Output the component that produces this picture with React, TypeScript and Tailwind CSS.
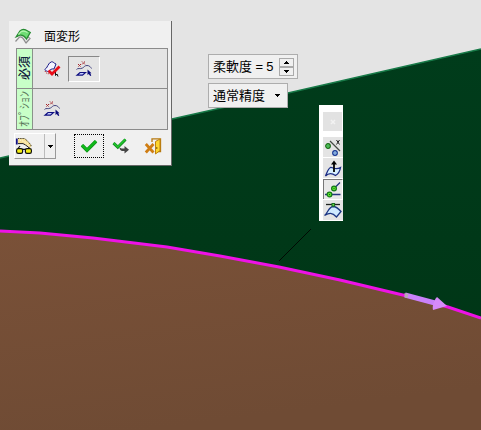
import React, { useState } from "react";

const fontStack = "font-['Liberation_Sans','Noto_Sans_CJK_JP',sans-serif]";

type IconProps = { children: React.ReactNode; className?: string };

function Icon({ children, className = "size-4" }: IconProps) {
  return (
    <svg viewBox="0 0 16 16" fill="none" aria-hidden="true" className={`${className} shrink-0 overflow-visible`}>
      {children}
    </svg>
  );
}

function SurfaceIcon() {
  return (
    <Icon>
      <path d="M0.5 12.5 L4.5 8 C8 7 9 11.5 11 14 L15 9.5 C13 8 11.5 6 9 5" fill="#e8e8e8" stroke="#8d8d8d" strokeWidth="1.2" />
      <path d="M1 8 L5 2 C6.5 0.5 8.500 0 10.5 0.8 L15.3 3.4 L11.5 10 C9.5 7 7.5 5.6 5 6.2 C3.500 6.6 2.2 7.6 1 8 Z" fill="#6fdc74" stroke="#278a32" strokeWidth="1.2" />
      <path d="M3.5 5.5 L6 2.7 C8 1.500 10 2 12.500 3.5" stroke="#b5f5b0" strokeWidth="1.2" />
    </Icon>
  );
}

function FacePickIcon() {
  return (
    <Icon>
      <path d="M0.8 8.5 C3.5 7.5 4 1.5 7.500 0.8 C9.500 0.5 10 2.500 12 3 L10 8 C7.500 7.500 6 8.500 4.500 11 C3.5 10 2 10.500 0.800 8.5 Z" fill="#f4f4ff" stroke="#1a1a86" />
      <path d="M1 10 C2.5 13 4 13 6 12.500" stroke="#b02020" strokeDasharray="1 1" />
      <path d="M11.5 9 V14.500 L13 13 L14 15.5" stroke="#111" />
      <path d="M4.5 9.500 L8 13 L15.500 5.5" stroke="#e80c18" strokeWidth="2.8" />
    </Icon>
  );
}

function CurvePickIcon() {
  return (
    <Icon>
      <path d="M2 3 L5 6 M5 3 L2 6 M6 0.5 L9 3.5 M9 0.5 L6 3.5" stroke="#a32026" strokeDasharray="1.4 0.5" />
      <path d="M0.5 8.5 C2 6.500 4 8.500 6.500 7 C8.500 6 8.500 4.500 11 4.500 C13.500 4.500 14.500 6 15.5 7.5" stroke="#43437f" />
      <path d="M1 14.2 L4 11.5 H9.5 L6.5 14.2 Z" fill="#c5cdff" stroke="#101080" strokeWidth="1.2" />
      <path d="M11.5 8.500 V14 L12.800 13 L14.2 15 L15.3 14.4 L14.2 12.2 H15.500 Z" fill="#0a0a7a" />
    </Icon>
  );
}

function PreviewIcon() {
  return (
    <Icon>
      <path d="M0.8 0.5 V6.5" stroke="#101080" strokeWidth="1.8" />
      <path d="M2 0.8 H8.5 L11 2.500 L15 7 V9.500 L12.500 9 L9.500 6.500 L7 5.500 H2 Z" fill="#f7df92" />
      <path d="M2 0.500 H8.5 L11 2.500 L15 7 V9" stroke="#4a4020" strokeDasharray="1.4 0.8" />
      <path d="M2 5.600 H7 L9.500 7 L12.500 9.2" stroke="#222" />
      <path d="M4 2 L8 4 L13 8 M6 1.800 L12 5.500" stroke="#fff9d8" strokeDasharray="1 1" />
      <rect x="0.6" y="10.600" width="6" height="4.800" rx="1.600" fill="#f5ef16" stroke="#111" strokeWidth="1.2" />
      <rect x="9.4" y="10.600" width="6" height="4.800" rx="1.600" fill="#f5ef16" stroke="#111" strokeWidth="1.2" />
      <path d="M6 11.3 H10 M2 10.500 L4 8 M13.500 10.500 L12.500 9" stroke="#111" strokeWidth="1.2" />
    </Icon>
  );
}

function CheckIcon() {
  return (
    <Icon>
      <path d="M1 7.2 L6 12.2 L15 3.2" stroke="#12911b" strokeWidth="3.6" />
      <path d="M1 7 L6 12 L15 3" stroke="#10b91a" strokeWidth="2.4" />
    </Icon>
  );
}

function ApplyIcon() {
  return (
    <Icon>
      <path d="M0.500 5.2 L4.800 9.2 L12.5 1.5" stroke="#128a20" strokeWidth="3" />
      <path d="M0.500 5 L4.800 8.900 L12.5 1.2" stroke="#20c52b" strokeWidth="1.6" />
      <path d="M6.500 9.5 L8.500 10.500 H11.500 V8 L16 11.8 L11.5 15.5 V13 H9 C7.500 12.500 6.500 11 6.500 9.500 Z" fill="#454545" />
    </Icon>
  );
}

function ExitIcon() {
  return (
    <Icon>
      <path d="M7 4 V0.8 H15.5 V13.5 H11" stroke="#b77910" strokeWidth="1.3" />
      <path d="M10.5 3.5 L15 1 V12.5 L10.5 16 Z" fill="#ffd52b" stroke="#bd8110" />
      <path d="M11.8 9 V11" stroke="#7a5008" />
      <path d="M0.8 6 L8.5 14.5 M8.5 6 L0.8 14.5" stroke="#cf7d13" strokeWidth="2.8" />
    </Icon>
  );
}

function PointLineIcon() {
  return (
    <Icon>
      <path d="M5 1 L15 11" stroke="#454b45" strokeWidth="1.3" />
      <path d="M11.500 0 L14.500 4.500 M14.500 0 L11.500 4.500" stroke="#222" />
      <circle cx="3" cy="6" r="2.3" fill="#5fe35f" stroke="#176817" strokeWidth="1.2" />
      <circle cx="10" cy="13" r="2.3" fill="#a8d3ff" stroke="#163590" strokeWidth="1.2" />
      <path d="M2.5 6 H3.5 M9.5 13 H10.5" stroke="#173060" />
    </Icon>
  );
}

function NormalIcon() {
  return (
    <Icon>
      <path d="M0.500 15 C2 12 3 7.500 5.500 6.5 C8 6 10 9.500 15.5 6.5 C15 10 13 13 10.500 14.5 C7 12 3.500 12 0.500 15 Z" fill="#d8f0ff" stroke="#1b2c84" strokeWidth="1.3" />
      <path d="M9 11 V2" stroke="#000" strokeWidth="1.8" />
      <path d="M9 -0.5 L12 3.500 H6 Z" fill="#000" />
    </Icon>
  );
}

function TangentIcon() {
  return (
    <Icon>
      <path d="M0 12.5 H15.5 M9 6.5 L15 0.5" stroke="#24347d" strokeWidth="1.3" />
      <circle cx="9" cy="6.5" r="2.4" fill="#57e52e" stroke="#167819" strokeWidth="1.2" />
      <circle cx="4.5" cy="12.5" r="2.4" fill="#57e52e" stroke="#167819" strokeWidth="1.2" />
      <path d="M8.5 6.5 H9.5 M4 12.5 H5" stroke="#155b16" />
    </Icon>
  );
}

function CurvatureIcon() {
  return (
    <Icon>
      <path d="M-0.500 12.5 C3 10 3.500 4 8 3.5 C11 3.5 13 5 16 8.5 L11.5 14 C7 9 4 10 -0.500 12.5 Z" fill="#cfeaff" stroke="#1b3583" strokeWidth="1.3" />
      <path d="M1 1.500 H15" stroke="#202420" strokeWidth="1.3" />
      <rect x="7" y="0.5" width="2.6" height="2.6" fill="#67df48" stroke="#196a21" />
    </Icon>
  );
}

function Caret({ up = false }: { up?: boolean }) {
  return (
    <svg viewBox="0 0 5 3" className="h-[3px] w-[5px]" aria-hidden="true" shapeRendering="crispEdges">
      <path d={up ? "M2 0h1v1h1v1h1v1H0V2h1V1h1z" : "M0 0h5v1H4v1H3v1H2V2H1V1H0z"} fill="#000" />
    </svg>
  );
}

function Scene() {
  return (
    <svg viewBox="0 0 481 430" preserveAspectRatio="none" className="absolute inset-0 size-full" aria-hidden="true">
      <defs>
        <linearGradient id="green" x1="0" y1="0" x2="0" y2="1">
          <stop offset="0" stopColor="#003c1b" />
          <stop offset="1" stopColor="#003415" />
        </linearGradient>
        <linearGradient id="brown" x1="0" y1="0" x2="0.3" y2="1">
          <stop offset="0" stopColor="#7a5138" />
          <stop offset="1" stopColor="#6f4b34" />
        </linearGradient>
      </defs>
      <path d="M0 158 L172 119 L288 93 L481 49 V430 H0 Z" fill="url(#green)" />
      <path d="M0 158 L172 119 L288 93 L481 49" fill="none" stroke="#177a48" strokeWidth="1.6" />
      <path d="M0 231 L40 233 L93 238 L167 247 L220 256 L279 267 L340 280 L407 296 L448 307 L481 318 V430 H0 Z" fill="url(#brown)" />
      <path d="M0 231 L40 233 L93 238 L167 247 L220 256 L279 267 L340 280 L407 296 L448 307 L481 318" fill="none" stroke="#ee12e6" strokeWidth="3" />
      <path d="M279 261 L311 229" stroke="#000a03" strokeWidth="1" />
      <path d="M405 295 L435 303" stroke="#c981fa" strokeWidth="5" />
      <path d="M404.5 293 L408.5 294 L407.5 298 L404.5 297 Z" fill="#b8a6b4" />
      <path d="M437 297 L447 306 L433 310 C432 306 434 300 437 297 Z" fill="#d68afa" />
    </svg>
  );
}

const sideLabel =
  "flex w-4 items-center justify-center border-r border-[#8a928a] bg-[#c8ffc8]";
const sideText = "rotate-180 whitespace-nowrap text-xs leading-4 [text-orientation:sideways] [writing-mode:vertical-rl]";
const iconButton = "flex h-[26px] w-8 items-center justify-center border";

function CommandPanel() {
  return (
    <section className="absolute left-[9px] top-[21px] w-[163px] border-b border-r border-[#666] bg-[#f0f0f0] pb-1.5 pl-[5px] pr-[3px]">
      <header className="flex h-[27px] items-center gap-[13px] pl-px pt-1">
        <SurfaceIcon />
        <h1 className="text-xs leading-4">面変形</h1>
      </header>
      <div className="ml-0.5 divide-y divide-[#8b8b8b] border border-[#8b8b8b] bg-[#e4e4e4]">
        <div className="flex h-10">
          <div className={sideLabel}>
            <span className={`${sideText} font-medium text-[#10203c]`}>必須</span>
          </div>
          <div className="flex items-center pl-[3px]">
            <button aria-label="面を選択" className={`${iconButton} border-transparent`}><FacePickIcon /></button>
            <button aria-label="曲線を選択" aria-pressed="true" className={`${iconButton} border-b-white border-l-[#888] border-r-white border-t-[#888]`}><CurvePickIcon /></button>
          </div>
        </div>
        <div className="flex h-10">
          <div className={sideLabel}>
            <span className={`${sideText} text-[#5c775c]`}>ｵﾌﾟｼｮﾝ</span>
          </div>
          <div className="flex items-center pl-[3px]">
            <button aria-label="拘束曲線を選択" className={`${iconButton} border-transparent`}><CurvePickIcon /></button>
          </div>
        </div>
      </div>
      <footer className="flex items-center pt-[3px]">
        <div className="flex h-[26px] w-[42px] border border-b-[#999] border-l-white border-r-[#999] border-t-white">
          <button aria-label="プレビュー" className="flex flex-1 items-center border-r border-[#bbb] pl-px"><PreviewIcon /></button>
          <button aria-label="プレビューのオプション" className="flex w-2.5 items-center justify-center"><Caret /></button>
        </div>
        <div className="ml-[18px] flex gap-0.5">
          <button aria-label="OK" className="flex h-6 w-[30px] items-center justify-center border border-dotted border-black"><CheckIcon /></button>
          <button aria-label="適用" className="flex h-6 w-[30px] items-center justify-center"><ApplyIcon /></button>
          <button aria-label="終了" className="flex h-6 w-[30px] items-center justify-center"><ExitIcon /></button>
        </div>
      </footer>
    </section>
  );
}

function Parameters() {
  const [value, setValue] = useState(5);
  const spin = "flex h-[9px] w-[15px] items-center justify-center border border-[#aaa] bg-[#f0f0f0]";
  return (
    <div className="absolute left-[208px] top-[54px] flex flex-col items-start gap-1 text-[13px] leading-4">
      <div className="flex h-[25px] w-[90px] items-center border border-[#adadad] bg-[#f0f0f0] pl-1 pr-[3px]">
        <label htmlFor="flex" className="whitespace-nowrap">柔軟度 =</label>
        <input id="flex" value={value} onChange={(e) => setValue(Number(e.target.value) || 0)} className="ml-[3px] w-2.5 min-w-0 bg-transparent p-0 outline-none" />
        <div className="ml-auto flex flex-col">
          <button aria-label="増やす" onClick={() => setValue(value + 1)} className={spin}><Caret up /></button>
          <button aria-label="減らす" onClick={() => setValue(value - 1)} className={spin}><Caret /></button>
        </div>
      </div>
      <div className="relative w-20">
        <select aria-label="精度" className="h-[25px] w-full appearance-none border border-[#adadad] bg-[#f0f0f0] pl-1 outline-none">
          <option>通常精度</option>
        </select>
        <span className="pointer-events-none absolute inset-y-0 right-2 flex items-center"><Caret /></span>
      </div>
    </div>
  );
}

function ContinuityBar() {
  const item = "flex h-5 w-full items-center justify-center border border-b-0";
  return (
    <div role="toolbar" aria-label="連続性" className="absolute left-[319px] top-[105px] w-6 bg-white pb-px pl-1 pt-[7px]">
      <button aria-label="閉じる" className="mb-1.5 flex h-[19px] w-[19px] items-center justify-center bg-[#e2e2e2]">
        <svg viewBox="0 0 6 6" className="size-1.5" aria-hidden="true"><path d="M1 1 L5 5 M5 1 L1 5" stroke="#f2f2f2" strokeWidth="1.5" /></svg>
      </button>
      <div className="flex flex-col gap-px">
        <button aria-label="点" className={`${item} border-transparent bg-[#e4e4e4]`}><PointLineIcon /></button>
        <button aria-label="法線" className={`${item} border-transparent bg-[#e4e4e4]`}><NormalIcon /></button>
        <button aria-label="接線" aria-pressed="true" className={`${item} border-l-[#777] border-r-white border-t-[#777] bg-[#e8e8e8]`}><TangentIcon /></button>
        <button aria-label="曲率" className={`${item} border-transparent bg-[#e4e4e4]`}><CurvatureIcon /></button>
      </div>
    </div>
  );
}

export default function App() {
  return (
    <main className={`relative min-h-screen w-full overflow-hidden bg-[#e4e4e4] text-black ${fontStack}`}>
      <Scene />
      <CommandPanel />
      <Parameters />
      <ContinuityBar />
    </main>
  );
}
